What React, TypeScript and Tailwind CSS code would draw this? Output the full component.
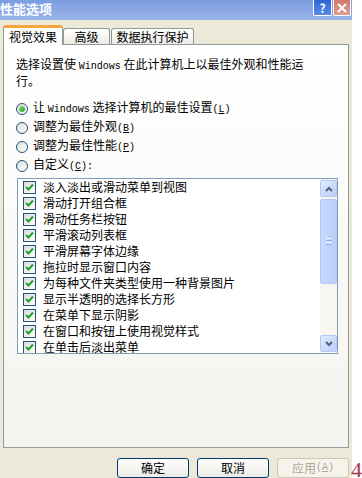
const items = [
  "淡入淡出或滑动菜单到视图",
  "滑动打开组合框",
  "滑动任务栏按钮",
  "平滑滚动列表框",
  "平滑屏幕字体边缘",
  "拖拉时显示窗口内容",
  "为每种文件夹类型使用一种背景图片",
  "显示半透明的选择长方形",
  "在菜单下显示阴影",
  "在窗口和按钮上使用视觉样式",
  "在单击后淡出菜单",
];

function En({ children }: { children: React.ReactNode }) {
  return <span className="font-['Liberation_Mono',monospace] text-[10px]">{children}</span>;
}

function Key({ k }: { k: string }) {
  return (
    <En>
      (<span className="underline">{k}</span>)
    </En>
  );
}

function Radio({ checked, children }: { checked?: boolean; children: React.ReactNode }) {
  return (
    <div className="flex h-[19px] items-center gap-[5px]">
      <div className="flex h-[12px] w-[12px] items-center justify-center rounded-full border border-[#1c5180] bg-gradient-to-br from-[#dcdcd6] to-white">
        {checked && <div className="h-[6px] w-[6px] rounded-full bg-gradient-to-br from-[#7ee06a] to-[#21a121]" />}
      </div>
      <span>{children}</span>
    </div>
  );
}

function Check({ label }: { label: string }) {
  return (
    <div className="flex h-[16px] shrink-0 items-center gap-[7px] pl-[5px] whitespace-nowrap">
      <div className="flex h-[13px] w-[13px] shrink-0 items-center justify-center border border-[#1c5180] bg-gradient-to-br from-[#dcdcd6] to-white">
        <svg width="9" height="9" viewBox="0 0 9 9">
          <path d="M1 4 L3.5 6.5 L8 1.5" fill="none" stroke="#21a121" strokeWidth="2" />
        </svg>
      </div>
      <span>{label}</span>
    </div>
  );
}

function Btn({ children, disabled }: { children: React.ReactNode; disabled?: boolean }) {
  return (
    <div
      className={
        disabled
          ? "flex h-[20px] w-[72px] items-center justify-center rounded-[3px] border border-[#c9c7ba] bg-[#f5f4ea] text-[#aca899]"
          : "flex h-[20px] w-[72px] items-center justify-center rounded-[3px] border border-[#003c74] bg-gradient-to-b from-white to-[#ecebe6]"
      }
    >
      {children}
    </div>
  );
}

export default function App() {
  return (
    <div className="flex h-[478px] w-[362px] overflow-hidden bg-white font-['Noto_Sans_CJK_SC',sans-serif] text-[12px] leading-[14px] text-black">
      <div className="flex w-[352px] shrink-0 flex-col bg-[#ece9d8]">
        {/* title bar */}
        <div className="flex h-[20px] items-start justify-between bg-gradient-to-b from-[#7b9ddf] to-[#9ab5ea]">
          <span className="pt-[1px] text-[13px] font-bold leading-[15px] text-white">性能选项</span>
          <div className="flex gap-[1px] pr-[1px]">
            <div className="flex h-[16px] w-[19px] items-center justify-center rounded-b-[2px] border border-t-0 border-white bg-gradient-to-b from-[#2f63d6] to-[#5a8ae8] text-[12px] font-bold leading-none text-white">
              ?
            </div>
            <div className="flex h-[16px] w-[18px] items-center justify-center rounded-b-[2px] border border-t-0 border-white bg-gradient-to-b from-[#d4786c] to-[#e39c90]">
              <svg width="10" height="10" viewBox="0 0 10 10">
                <path d="M1 1 L9 9 M9 1 L1 9" stroke="white" strokeWidth="2" />
              </svg>
            </div>
          </div>
        </div>

        {/* tabs */}
        <div className="flex h-[24px] items-end pl-[3px]">
          <div className="relative z-10 mb-[-1px] flex h-[20px] w-[60px] items-center justify-center rounded-t-[3px] border-x border-t-[3px] border-x-[#919b9c] border-t-[#f4a53c] bg-white">
            视觉效果
          </div>
          <div className="flex h-[16px] w-[47px] items-center justify-center rounded-t-[3px] border border-b-0 border-[#919b9c] bg-gradient-to-b from-white to-[#ecebe4]">
            高级
          </div>
          <div className="ml-[1px] flex h-[16px] w-[83px] items-center justify-center rounded-t-[3px] border border-b-0 border-[#919b9c] bg-gradient-to-b from-white to-[#ecebe4]">
            数据执行保护
          </div>
        </div>

        {/* tab page */}
        <div className="ml-[3px] flex h-[404px] w-[346px] flex-col border border-[#919b9c] bg-gradient-to-b from-white to-[#f4f3ee] pl-[12px] pt-[12px]">
          <p>
            选择设置使 <En>Windows</En> 在此计算机上以最佳外观和性能运
            <br />
            行。
          </p>
          <div className="mt-[11px] flex flex-col">
            <Radio checked>
              让 <En>Windows</En> 选择计算机的最佳设置<Key k="L" />
            </Radio>
            <Radio>
              调整为最佳外观<Key k="B" />
            </Radio>
            <Radio>
              调整为最佳性能<Key k="P" />
            </Radio>
            <Radio>
              自定义<Key k="C" />
              <En>:</En>
            </Radio>
          </div>

          <div className="ml-[1px] mt-[3px] flex h-[176px] w-[321px] border border-[#7f9db9] bg-white">
            <div className="flex flex-1 flex-col overflow-hidden">
              {items.map((t) => (
                <Check key={t} label={t} />
              ))}
            </div>
            <div className="flex w-[17px] flex-col bg-[#f7f6f1]">
              <div className="mt-[1px] flex h-[17px] items-center justify-center rounded-[2px] border border-[#b4c8f6] bg-gradient-to-br from-[#e2ebfd] to-[#b9cef8]">
                <svg width="8" height="6" viewBox="0 0 8 6">
                  <path d="M1 5 L4 2 L7 5" fill="none" stroke="#4d6185" strokeWidth="2" />
                </svg>
              </div>
              <div className="mt-[2px] flex h-[85px] items-center justify-center rounded-[2px] border border-[#b4c8f6] bg-gradient-to-r from-[#c9d8fc] to-[#b9cef8]">
                <div className="flex flex-col gap-[1px]">
                  <div className="h-[1px] w-[6px] bg-[#eef3fe]" />
                  <div className="h-[1px] w-[6px] bg-[#8cb0f8]" />
                  <div className="h-[1px] w-[6px] bg-[#eef3fe]" />
                  <div className="h-[1px] w-[6px] bg-[#8cb0f8]" />
                </div>
              </div>
              <div className="flex-1" />
              <div className="mb-[1px] flex h-[17px] items-center justify-center rounded-[2px] border border-[#b4c8f6] bg-gradient-to-br from-[#e2ebfd] to-[#b9cef8]">
                <svg width="8" height="6" viewBox="0 0 8 6">
                  <path d="M1 1 L4 4 L7 1" fill="none" stroke="#4d6185" strokeWidth="2" />
                </svg>
              </div>
            </div>
          </div>
        </div>

        {/* buttons */}
        <div className="mt-[10px] flex justify-end gap-[8px] pr-[3px]">
          <Btn>确定</Btn>
          <Btn>取消</Btn>
          <Btn disabled>
            应用<Key k="A" />
          </Btn>
        </div>
      </div>
      <div className="flex flex-col justify-end">
        <span className="-ml-[1px] mb-[-2px] font-['Liberation_Serif',serif] text-[22px] leading-[20px] text-[#a8334f]">4.</span>
      </div>
    </div>
  );
}
